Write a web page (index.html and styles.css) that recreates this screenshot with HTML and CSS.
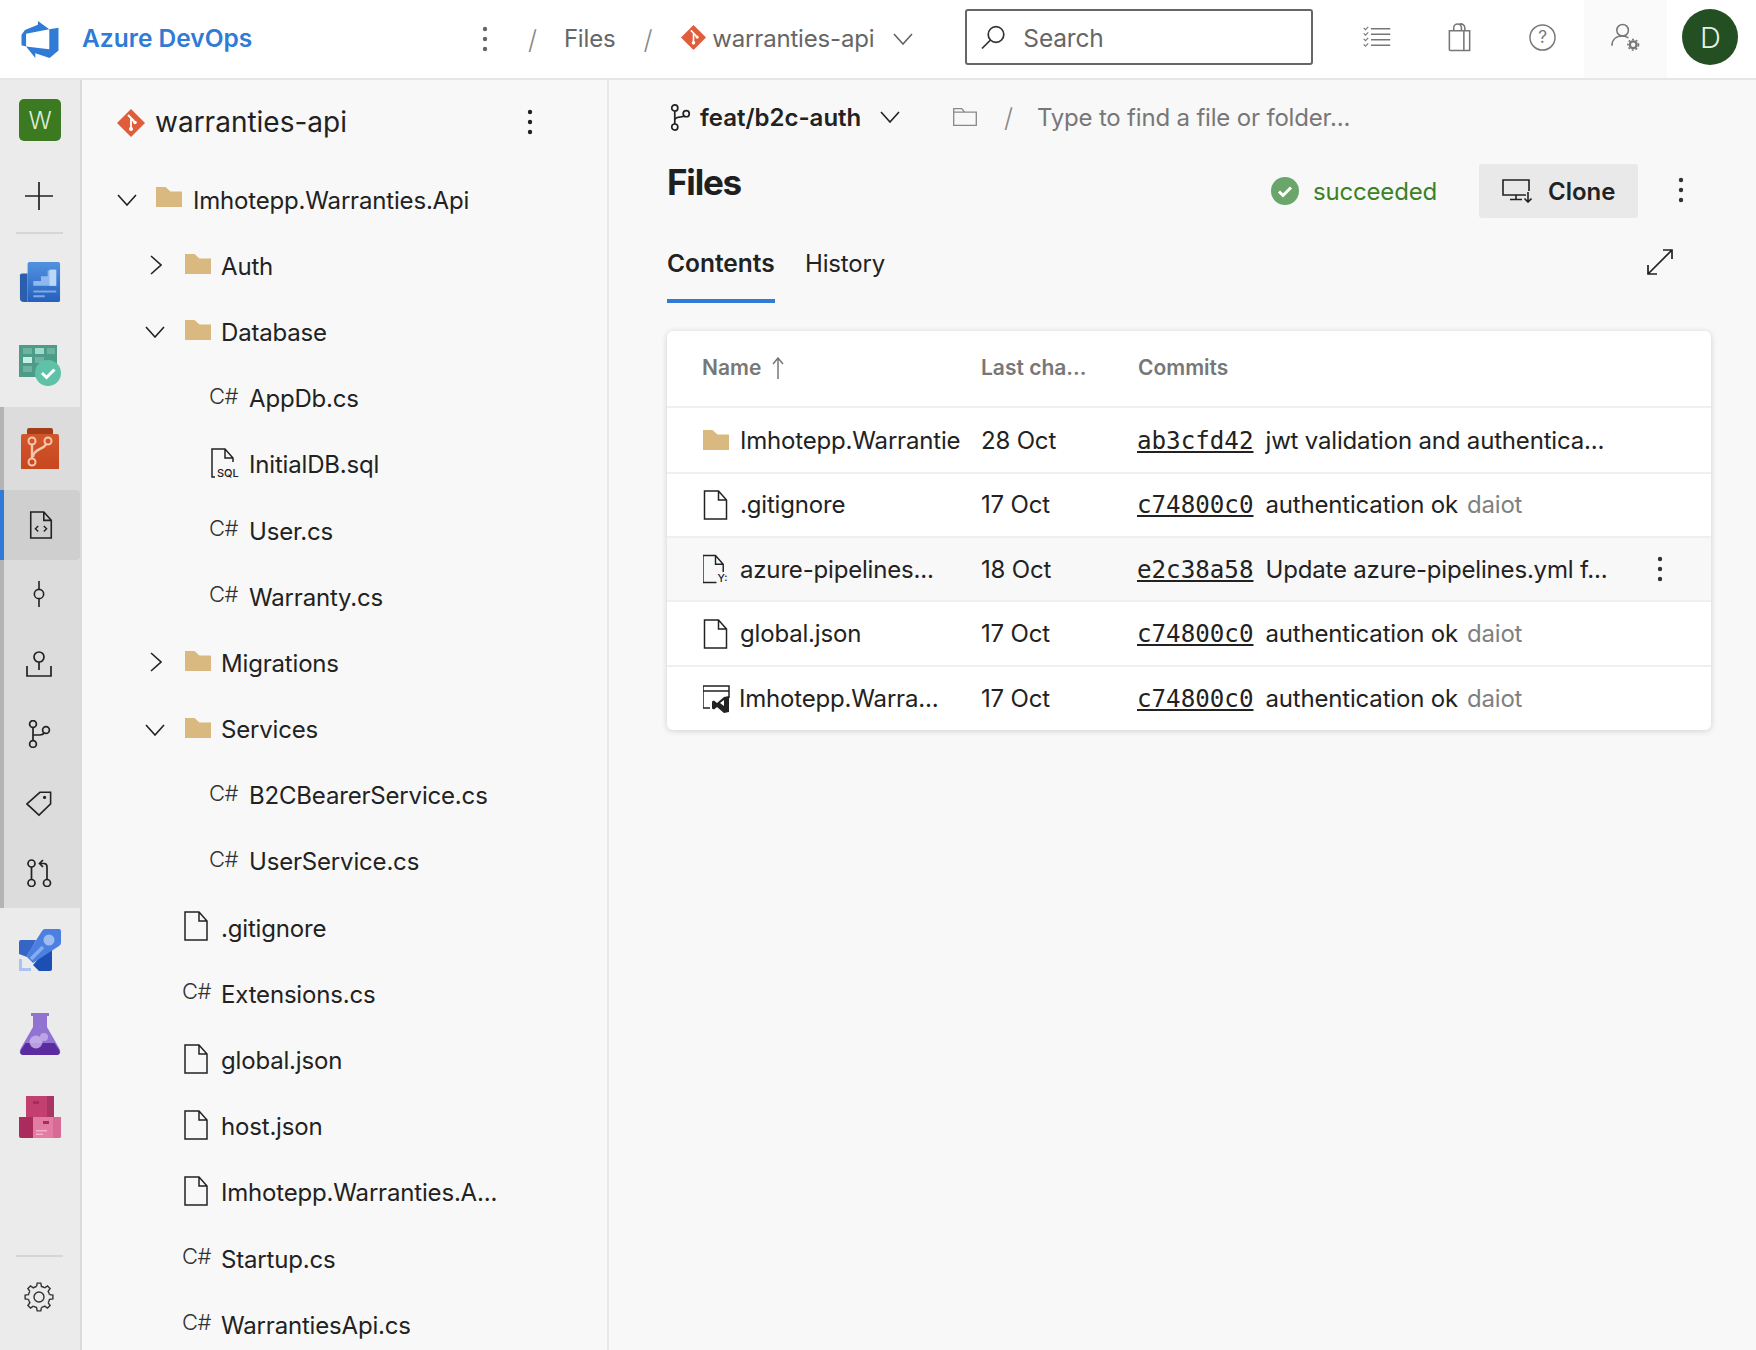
FILE: index.html
```html
<!DOCTYPE html>
<html lang="en">
<head>
<meta charset="utf-8">
<title>Files - warranties-api</title>
<link rel="stylesheet" href="styles.css">
</head>
<body>
<svg class="defs" aria-hidden="true">
  <symbol id="folder" viewBox="0 0 26 20"><path d="M0 0h9.500l5 4.500H26V20H0z" fill="#d9b97f"/></symbol>
  <symbol id="file" viewBox="0 0 24 30"><path d="M1 1h14l8 9v19H1zM15 1v9h8" fill="none" stroke="#222" stroke-width="1.500"/></symbol>
  <symbol id="git" viewBox="0 0 28 28"><path d="M14 0l14 14-14 14L0 14z" fill="#e05d3c"/><path d="M11 6l6 6M14 9v10M14 9.500l4.500 4.500" stroke="#fff" stroke-width="1.800" fill="none"/><circle cx="14" cy="20" r="2" fill="#fff"/><circle cx="18" cy="13.500" r="1.800" fill="#fff"/></symbol>
  <symbol id="down" viewBox="0 0 20 12"><path d="M1 1l9 10 9-10" fill="none" stroke="#222" stroke-width="1.600"/></symbol>
  <symbol id="right" viewBox="0 0 12 20"><path d="M1 1l10 9-10 9" fill="none" stroke="#222" stroke-width="1.600"/></symbol>
  <symbol id="kebab" viewBox="0 0 6 26"><circle cx="3" cy="3" r="2.200"/><circle cx="3" cy="13" r="2.200"/><circle cx="3" cy="23" r="2.200"/></symbol>
  <symbol id="branch" viewBox="0 0 22 28"><g fill="none" stroke="currentColor" stroke-width="1.800"><circle cx="5" cy="4" r="3.200"/><circle cx="5" cy="24" r="3.200"/><circle cx="17" cy="10" r="3.200"/><path d="M5 7.200v13.600M5 17c0-3 3-3 6-3.500 2-.4 4-.7 4.500-1.500"/></g></symbol>
  <path id="tooth" d="M-2.430-10.520L-1.830-13.880H1.830L2.430-10.520A10.800 10.800 0 0 1 5.720-9.160"/>
</svg>

<header class="topbar">
  <svg class="logo" viewBox="0 0 24 24"><path d="M0 8.877L2.247 5.910l8.405-3.416V.022l7.370 5.393L2.966 8.338v8.225L0 15.707zm24-4.450v14.651l-5.753 4.900-9.303-3.057v3.056l-5.978-7.416 15.057 1.798V5.415z" fill="#2f7bd5"/></svg>
  <span class="brand">Azure DevOps</span>
  <svg class="kebab top-kebab"><use href="#kebab"/></svg>
  <span class="slash crumb-slash-1">/</span>
  <span class="crumb crumb-files">Files</span>
  <span class="slash crumb-slash-2">/</span>
  <svg class="git-small"><use href="#git"/></svg>
  <span class="crumb crumb-repo">warranties-api</span>
  <svg class="chev-top"><use href="#down"/></svg>
  <div class="search">
    <svg class="search-icon" viewBox="0 0 24 24"><g fill="none" stroke="#333" stroke-width="1.700"><circle cx="15" cy="9" r="7.800"/><path d="M9.500 14.500L1 23"/></g></svg>
    <span>Search</span>
  </div>
  <div class="top-icons">
    <div class="top-icon"><svg class="ti" viewBox="0 0 30 24"><g fill="none" stroke="#777" stroke-width="1.500"><path d="M9 3h21M9 9h21M9 15h21M9 21h21"/><path d="M1 2l2 2 3-3M1 8l2 2 3-3M1 14l2 2 3-3M1 20l2 2 3-3" stroke-width="1.200"/></g></svg></div>
    <div class="top-icon"><svg class="ti-bag" viewBox="0 0 24 30"><g fill="none" stroke="#777" stroke-width="1.600"><path d="M1 8h21v20.500H2a1 1 0 0 1-1-1zM16 8v20.500M5.500 8V5a4 4 0 0 1 8 0v3M11 1.500a4 4 0 0 1 6 3.500v3"/></g></svg></div>
    <div class="top-icon"><svg class="ti-help" viewBox="0 0 28 28"><circle cx="14" cy="14" r="13" fill="none" stroke="#777" stroke-width="1.500"/><text x="14" y="20" text-anchor="middle" class="help-q">?</text></svg></div>
    <div class="top-icon top-icon-active"><svg class="ti-user" viewBox="0 0 30 30"><g fill="none" stroke="#777" stroke-width="1.600"><circle cx="12" cy="8" r="6"/><path d="M1 24c0-6 4-10 11-10 2 0 4 .5 6 2"/></g><circle cx="23" cy="23" r="3.500" fill="none" stroke="#777" stroke-width="2.400"/><circle cx="23" cy="23" r="5.500" fill="none" stroke="#777" stroke-width="1.600" stroke-dasharray="2 2"/></svg></div>
    <div class="avatar">D</div>
  </div>
</header>

<div class="body">
  <nav class="nav">
    <div class="nav-item nav-lg"><div class="project">W</div></div>
    <div class="nav-item nav-plus"><svg class="ni-plus" viewBox="0 0 28 28"><path d="M14 0v28M0 14h28" stroke="#222" stroke-width="1.700"/></svg></div>
    <div class="nav-sep"></div>
    <div class="nav-item nav-service nav-first">
      <svg class="ni" viewBox="0 0 42 44"><path d="M0 15a2 2 0 0 1 2-2h6v30H4a4 4 0 0 1-4-4z" fill="#2b5fae"/><path d="M8 3a2 2 0 0 1 2-2h30a2 2 0 0 1 2 2v38a2 2 0 0 1-2 2H8z" fill="url(#gb)"/><path d="M14 21h8v-5h7v-6h9v16H14z" fill="#8fb9ee"/><path d="M31 9h7v17h-7z" fill="#bcd7f8"/><path d="M14 31h24v2H14zM14 36h12v2H14z" fill="#7fa9e4"/><defs><linearGradient id="gb" x1="0" y1="0" x2="0" y2="1"><stop offset="0" stop-color="#5192e0"/><stop offset="1" stop-color="#2560bd"/></linearGradient></defs></svg>
    </div>
    <div class="nav-item nav-service">
      <svg class="ni" viewBox="0 0 42 42"><path d="M0 1h38v32H0z" fill="#4e9c87"/><path d="M4 4h9v6H4zM16 4h9v6h-9zM28 4h8v6h-8zM4 13h9v6H4zM16 13h9v6h-9zM4 22h9v6H4z" fill="#6cb4a1"/><path d="M16 4h9v6h-9z" fill="#9edbc9"/><path d="M4 13h9v6H4z" fill="#c2f0e4"/><circle cx="29" cy="29" r="13" fill="#5fc2a8"/><path d="M23 29l4.500 4.500 8-8" fill="none" stroke="#fff" stroke-width="3"/></svg>
    </div>
    <div class="nav-group">
      <div class="nav-item nav-service nav-repos">
        <svg class="ni-repos" viewBox="0 0 38 42"><path d="M6 3a2 2 0 0 1 2-2h22a2 2 0 0 1 2 2v4H6z" fill="#a33c19"/><path d="M0 9a2 2 0 0 1 2-2h34a2 2 0 0 1 2 2v33H0z" fill="url(#gr)"/><g fill="none" stroke="#f7c6ac" stroke-width="2"><circle cx="11" cy="14" r="3.500"/><circle cx="27" cy="14" r="3.500"/><circle cx="11" cy="35" r="3.500"/><path d="M11 17.500v14M25 17c-1 5-13 5-13 13" stroke-width="2.400"/></g><defs><linearGradient id="gr" x1="0" y1="0" x2="0" y2="1"><stop offset="0" stop-color="#d2562c"/><stop offset="1" stop-color="#c7471f"/></linearGradient></defs></svg>
      </div>
      <div class="nav-item nav-sub nav-active">
        <svg class="ns" viewBox="0 0 24 30"><path d="M1 1h14l8 9v19H1zM15 1v9h8" fill="none" stroke="#222" stroke-width="1.700"/><path d="M9 16l-3 3 3 3M15 16l3 3-3 3" fill="none" stroke="#222" stroke-width="1.500"/></svg>
      </div>
      <div class="nav-item nav-sub"><svg class="ns" viewBox="0 0 24 30"><g fill="none" stroke="#222" stroke-width="1.700"><circle cx="12" cy="15" r="5"/><path d="M12 1v9M12 20v9"/></g></svg></div>
      <div class="nav-item nav-sub"><svg class="ns" viewBox="0 0 26 26"><g fill="none" stroke="#222" stroke-width="1.700"><circle cx="13" cy="6" r="5"/><path d="M13 11v8M1 15v10h24V15"/></g></svg></div>
      <div class="nav-item nav-sub"><svg class="ns" viewBox="0 0 22 28"><g fill="none" stroke="#222" stroke-width="1.700"><circle cx="5" cy="4" r="3.400"/><circle cx="5" cy="24" r="3.400"/><circle cx="18" cy="10" r="3.400"/><path d="M5 7.400v13.200M5 15h6c3 0 5-1 5-3"/></g></svg></div>
      <div class="nav-item nav-sub"><svg class="ns" viewBox="0 0 28 28"><path d="M1 15L15 2.500h11.500V15L14 27z" fill="none" stroke="#222" stroke-width="1.700"/><circle cx="20" cy="8" r="1.700" fill="#222"/></svg></div>
      <div class="nav-item nav-sub"><svg class="ns" viewBox="0 0 24 28"><g fill="none" stroke="#222" stroke-width="1.700"><circle cx="4.500" cy="4.500" r="3.500"/><circle cx="4.500" cy="24" r="3.500"/><circle cx="20" cy="24" r="3.500"/><path d="M4.500 8v12.500M20 20.500V8c0-2-1-3.500-3-3.500h-4M16 1l-3.500 3.500L16 8"/></g></svg></div>
    </div>
    <div class="nav-item nav-service">
      <svg class="ni" viewBox="0 0 42 42"><path d="M2 11h15L8 28l-8-3V13a2 2 0 0 1 2-2z" fill="#3565c5"/><path d="M14 36L33 14v26a2 2 0 0 1-2 2H20z" fill="#1c4fb3"/><path d="M7 27L23 2a4 4 0 0 1 3-2h14a2 2 0 0 1 2 2v12a4 4 0 0 1-2 3L14 34z" fill="#4b80e0"/><circle cx="30" cy="11" r="5.500" fill="#9dbdf1"/><path d="M0 30h3v9h9v3H0z" fill="#a9c3f3"/><path d="M12 30L24 18" stroke="#86acee" stroke-width="3.500"/></svg>
    </div>
    <div class="nav-item nav-service nav-flask">
      <svg class="ni" viewBox="0 0 42 42"><path d="M12 0h18v3h-2v11l12 21c2 3 2 7-3 7H5c-5 0-5-4-3-7l12-21V3h-2z" fill="#9174d2"/><path d="M6.500 30h29L40 37c1.500 3 .5 5-3 5H5c-3.500 0-4.500-2-3-5z" fill="#5a2ca0"/><circle cx="17" cy="29" r="6.500" fill="#c9b1ea" opacity=".85"/><circle cx="25" cy="24" r="4" fill="#bda3e6"/></svg>
    </div>
    <div class="nav-item nav-service">
      <svg class="ni" viewBox="0 0 42 42"><path d="M7 0h28v21H7z" fill="#c23f6f"/><path d="M28 0h7v21h-7z" fill="#aa3562"/><path d="M0 21h14v21H2a2 2 0 0 1-2-2z" fill="#a92c5c"/><path d="M14 21h28v19a2 2 0 0 1-2 2H14z" fill="#e37ba3"/><path d="M34 21h8v19a2 2 0 0 1-2 2h-6z" fill="#d76b95"/><path d="M14 5h6v3h-6zM24 25h6v3h-6z" fill="#a0305d"/><path d="M17 34h11v1.500H17zM17 37.500h7V39h-7z" fill="#f4b2cb"/></svg>
    </div>
    <div class="nav-sep nav-sep-bottom"></div>
    <div class="nav-item nav-gear">
      <svg class="ni-gear" viewBox="0 0 30 30"><g fill="none" stroke="#333" stroke-width="1.400"><circle cx="15" cy="15" r="5"/><use href="#tooth" transform="translate(15 15)"/><use href="#tooth" transform="translate(15 15) rotate(45)"/><use href="#tooth" transform="translate(15 15) rotate(90)"/><use href="#tooth" transform="translate(15 15) rotate(135)"/><use href="#tooth" transform="translate(15 15) rotate(180)"/><use href="#tooth" transform="translate(15 15) rotate(225)"/><use href="#tooth" transform="translate(15 15) rotate(270)"/><use href="#tooth" transform="translate(15 15) rotate(315)"/></g></svg>
    </div>
  </nav>

  <aside class="tree">
    <div class="tree-head">
      <svg class="git-large"><use href="#git"/></svg>
      <span class="tree-title">warranties-api</span>
      <svg class="kebab tree-kebab"><use href="#kebab"/></svg>
    </div>
    <ul class="tree-list">
      <li class="row d0"><svg class="tw-down"><use href="#down"/></svg><svg class="folder"><use href="#folder"/></svg><span class="name">Imhotepp.Warranties.Api</span></li>
      <li class="row d1"><svg class="tw-right"><use href="#right"/></svg><svg class="folder"><use href="#folder"/></svg><span class="name">Auth</span></li>
      <li class="row d1"><svg class="tw-down"><use href="#down"/></svg><svg class="folder"><use href="#folder"/></svg><span class="name">Database</span></li>
      <li class="row d2"><span class="cs">C#</span><span class="name">AppDb.cs</span></li>
      <li class="row d2"><svg class="file-ic sql" viewBox="0 0 28 30"><path d="M22 14V10l-8-9H1v28h3M14 1v9h8" fill="none" stroke="#222" stroke-width="1.500"/><text x="6" y="28.500" class="mini">SQL</text></svg><span class="name">InitialDB.sql</span></li>
      <li class="row d2"><span class="cs">C#</span><span class="name">User.cs</span></li>
      <li class="row d2"><span class="cs">C#</span><span class="name">Warranty.cs</span></li>
      <li class="row d1"><svg class="tw-right"><use href="#right"/></svg><svg class="folder"><use href="#folder"/></svg><span class="name">Migrations</span></li>
      <li class="row d1"><svg class="tw-down"><use href="#down"/></svg><svg class="folder"><use href="#folder"/></svg><span class="name">Services</span></li>
      <li class="row d2"><span class="cs">C#</span><span class="name">B2CBearerService.cs</span></li>
      <li class="row d2"><span class="cs">C#</span><span class="name">UserService.cs</span></li>
      <li class="row d1f"><svg class="file-ic"><use href="#file"/></svg><span class="name">.gitignore</span></li>
      <li class="row d1f"><span class="cs">C#</span><span class="name">Extensions.cs</span></li>
      <li class="row d1f"><svg class="file-ic"><use href="#file"/></svg><span class="name">global.json</span></li>
      <li class="row d1f"><svg class="file-ic"><use href="#file"/></svg><span class="name">host.json</span></li>
      <li class="row d1f"><svg class="file-ic"><use href="#file"/></svg><span class="name">Imhotepp.Warranties.A...</span></li>
      <li class="row d1f"><span class="cs">C#</span><span class="name">Startup.cs</span></li>
      <li class="row d1f"><span class="cs">C#</span><span class="name">WarrantiesApi.cs</span></li>
    </ul>
  </aside>

  <main class="main">
    <div class="pathbar">
      <svg class="branch-ic"><use href="#branch"/></svg>
      <span class="branch-name">feat/b2c-auth</span>
      <svg class="chev-branch"><use href="#down"/></svg>
      <svg class="path-folder" viewBox="0 0 24 18"><path d="M.7.7h8l3 3.500h11.600v13.100H.7zM.7 4.200h11" fill="none" stroke="#888" stroke-width="1.300"/></svg>
      <span class="slash path-slash">/</span>
      <span class="path-hint">Type to find a file or folder...</span>
    </div>
    <div class="title-row">
      <h1 class="title">Files</h1>
      <div class="status">
        <svg class="status-ic" viewBox="0 0 28 28"><circle cx="14" cy="14" r="14" fill="#6aa56c"/><path d="M8 14.500l4 4 8-8" fill="none" stroke="#fff" stroke-width="3"/></svg>
        <span class="status-text">succeeded</span>
      </div>
      <button class="clone">
        <svg class="clone-ic" viewBox="0 0 30 24"><g fill="none" stroke="#222" stroke-width="1.600"><path d="M24 16H1V1h26v11M14 16v4M8 20.500h12M26 13v10M22.500 19.500L26 23l3.500-3.500"/></g></svg>
        <span>Clone</span>
      </button>
      <svg class="kebab title-kebab"><use href="#kebab"/></svg>
    </div>
    <div class="tabs">
      <div class="tab tab-active">Contents</div>
      <div class="tab">History</div>
      <svg class="expand" viewBox="0 0 26 26"><path d="M1 25L25 1M16 1h9v9M1 16v9h9" fill="none" stroke="#222" stroke-width="1.700"/></svg>
    </div>
    <section class="card">
      <div class="t-row t-head">
        <div class="col-name head-name">Name <svg class="sort" viewBox="0 0 12 22"><path d="M6 22V1M1 7l5-6 5 6" fill="none" stroke="#777" stroke-width="1.500"/></svg></div>
        <div class="col-date">Last cha...</div>
        <div class="col-commit">Commits</div>
      </div>
      <div class="t-row t-first">
        <div class="col-name"><svg class="t-folder"><use href="#folder"/></svg><span class="t-name clip">Imhotepp.Warrantie</span></div>
        <div class="col-date">28 Oct</div>
        <div class="col-commit"><a class="hash">ab3cfd42</a><span class="msg">jwt validation and authentica...</span></div>
      </div>
      <div class="t-row">
        <div class="col-name"><svg class="t-file"><use href="#file"/></svg><span class="t-name">.gitignore</span></div>
        <div class="col-date">17 Oct</div>
        <div class="col-commit"><a class="hash">c74800c0</a><span class="msg">authentication ok</span><span class="author">daiot</span></div>
      </div>
      <div class="t-row t-hover">
        <div class="col-name"><svg class="t-file" viewBox="0 0 28 30"><path d="M22 18V10l-8-9H1v28h14M14 1v9h8" fill="none" stroke="#222" stroke-width="1.500"/><text x="16" y="29" class="mini">Y:</text></svg><span class="t-name">azure-pipelines...</span></div>
        <div class="col-date">18 Oct</div>
        <div class="col-commit"><a class="hash">e2c38a58</a><span class="msg">Update azure-pipelines.yml f...</span></div>
        <svg class="kebab row-kebab"><use href="#kebab"/></svg>
      </div>
      <div class="t-row">
        <div class="col-name"><svg class="t-file"><use href="#file"/></svg><span class="t-name">global.json</span></div>
        <div class="col-date">17 Oct</div>
        <div class="col-commit"><a class="hash">c74800c0</a><span class="msg">authentication ok</span><span class="author">daiot</span></div>
      </div>
      <div class="t-row t-last">
        <div class="col-name"><svg class="t-file t-sln" viewBox="0 0 28 28"><path d="M8 23H1V1h26v12M1 6h26" fill="none" stroke="#222" stroke-width="1.500"/><path d="M27 11v16l-5 1-7-6-3 2.500-2-1v-7l2-1 3 2.500 7-6zM22 15l-4 3 4 3z" fill="#222" fill-rule="evenodd"/></svg><span class="t-name">Imhotepp.Warra...</span></div>
        <div class="col-date">17 Oct</div>
        <div class="col-commit"><a class="hash">c74800c0</a><span class="msg">authentication ok</span><span class="author">daiot</span></div>
      </div>
    </section>
  </main>
</div>
</body>
</html>
```

FILE: styles.css
```css
* { box-sizing: border-box; }
html, body { margin: 0; padding: 0; height: 100%; }
body {
  width: 1756px;
  height: 1350px;
  overflow: hidden;
  font-family: Inter, "Liberation Sans", sans-serif;
  font-size: 24px;
  letter-spacing: -.18px;
  color: #222;
  background: #f8f8f8;
  display: flex;
  flex-direction: column;
}
svg { display: block; flex: none; }
.defs { display: none; }

/* top bar */
.topbar {
  height: 80px;
  flex: none;
  display: flex;
  align-items: center;
  background: #fff;
  border-bottom: 2px solid #e6e6e6;
  padding-left: 21px;
}
.logo { width: 38px; height: 37px; }
.brand { margin-left: 23px; font-size: 24.500px; letter-spacing: 0; font-weight: 600; color: #2f7bd5; width: 195px; white-space: nowrap; margin-bottom: 2px; }
.kebab { width: 6px; height: 26px; fill: #555; }
.top-kebab { margin-left: 205px; fill: #666; }
.slash { font-size: 26px; color: #888; font-weight: 300; }
.crumb-slash-1 { margin-left: 40px; }
.crumb { color: #666; margin-bottom: 2px; }
.crumb-files { margin-left: 27px; }
.crumb-slash-2 { margin-left: 28px; }
.git-small { margin-left: 29px; width: 25px; height: 25px; margin-bottom: 3px; }
.crumb-repo { margin-left: 6px; }
.chev-top { margin-left: 19px; width: 20px; height: 12px; opacity: .7; }
.search {
  margin-left: 52px;
  width: 348px;
  height: 56px;
  border: 2px solid #666;
  border-radius: 3px;
  display: flex;
  align-items: center;
  padding: 2px 0 0 14px;
  color: #666;
  font-size: 24.500px;
  margin-bottom: 4px;
}
.search-icon { width: 24px; height: 25px; margin: 0 18px 2px 0; }
.top-icons { display: flex; align-items: center; margin-left: 22px; height: 78px; }
.top-icon { width: 83px; height: 78px; display: flex; align-items: center; justify-content: center; padding-bottom: 4px; }
.top-icon-active { background: #fafafa; }
.ti { width: 29px; height: 22px; }
.ti-bag { width: 24px; height: 29px; }
.ti-help { width: 27px; height: 27px; }
.ti-user { width: 29px; height: 30px; }
.help-q { font-size: 18px; fill: #777; font-family: Inter, sans-serif; }
.avatar {
  margin-left: 15px;
  width: 56px;
  height: 56px;
  border-radius: 50%;
  background: #234f22;
  color: #e8efe6;
  font-size: 29px;
  font-weight: 300;
  display: flex;
  align-items: center;
  justify-content: center;
  margin-bottom: 4px;
}

/* body */
.body { flex: 1; display: flex; min-height: 0; }

/* left nav */
.nav {
  width: 82px;
  flex: none;
  background: #ebebeb;
  border-right: 2px solid #dadada;
  display: flex;
  flex-direction: column;
}
.nav-item { display: flex; align-items: center; justify-content: center; }
.nav-lg { height: 80px; }
.nav-plus { height: 72px; padding-right: 2px; }
.nav-sep { height: 2px; margin: 0 17px 0 16px; background: #d6d6d6; flex: none; }
.nav-service { height: 83.500px; }
.nav-first { margin-top: 6px; }
.project {
  width: 42px;
  height: 42px;
  border-radius: 5px;
  background: #3c7a21;
  color: #dfeeda;
  font-size: 24px;
  font-weight: 300;
  display: flex;
  align-items: center;
  justify-content: center;
}
.ni-plus { width: 28px; height: 28px; }
.ni { width: 42px; height: 42px; }
.ni-repos { width: 38px; height: 42px; }
.nav-group {
  background: #dcdcdc;
  border-left: 4px solid #b4b4b4;
  height: 501px;
  display: flex;
  flex-direction: column;
}
.nav-repos { height: 83px; padding-right: 4px; }
.nav-sub { height: 69.800px; padding-right: 6px; }
.nav-active {
  background: #cfcfcf;
  border-left: 4px solid #2f7bd5;
  margin-left: -4px;
  padding-right: 2px;
  border-radius: 0 4px 4px 0;
}
.ns { width: 26px; height: 28px; }
.nav-flask { padding-top: 2px; }
.nav-sep-bottom { margin-top: auto; }
.nav-gear { height: 80px; margin-bottom: 13px; padding-right: 2px; }
.ni-gear { width: 30px; height: 30px; }

/* tree */
.tree {
  width: 527px;
  flex: none;
  border-right: 2px solid #e8e8e8;
  overflow: hidden;
}
.tree-head { height: 87px; display: flex; align-items: center; padding-left: 35px; }
.git-large { width: 28px; height: 28px; margin-bottom: 2px; }
.tree-title { margin: 0 0 3px 10px; font-size: 28px; letter-spacing: 0; width: 372px; }
.tree-kebab { fill: #222; margin-bottom: 4px; }
.tree-list { list-style: none; margin: 0; padding: 0; }
.row { height: 66.200px; display: flex; align-items: center; white-space: nowrap; }
.folder { width: 26px; height: 20px; margin-bottom: 4px; }
.d0 { padding-left: 35px; }
.d0 .folder { margin-bottom: 6px; }
.d0 .tw-down { width: 20px; height: 12px; margin-right: 19px; }
.d0 .name { margin-left: 11px; }
.d1 { padding-left: 63px; }
.d1 .tw-down { width: 20px; height: 12px; margin-right: 20px; }
.d1 .tw-right { width: 12px; height: 20px; margin: 0 23px 2px 5px; }
.d1 .name { margin-left: 10px; }
.d2 { padding-left: 127px; }
.d2 .name { margin-left: 12px; }
.d1f { padding-left: 100px; }
.d1f .name { margin-left: 11px; }
.cs { width: 28px; font-size: 22px; font-weight: 300; color: #333; padding-bottom: 6px; white-space: nowrap; letter-spacing: -.5px; }
.file-ic { width: 28px; height: 30px; margin-bottom: 4px; }
.sql { margin-left: 2px; margin-right: -2px; }
.mini { font-size: 11px; fill: #222; font-family: Inter, sans-serif; font-weight: 500; letter-spacing: 0; }

/* main */
.main { flex: 1; padding: 0 45px 0 58px; min-width: 0; }
.pathbar { height: 74px; display: flex; align-items: center; padding-left: 3px; }
.branch-ic { width: 21px; height: 27px; color: #222; }
.branch-name { margin-left: 9px; font-weight: 600; letter-spacing: 0; width: 164px; white-space: nowrap; }
.chev-branch { margin-left: 16px; width: 20px; height: 12px; }
.path-folder { margin-left: 53px; width: 24px; height: 18px; }
.path-slash { margin-left: 27px; }
.path-hint { margin-left: 24px; color: #777; white-space: nowrap; }
.title-row { display: flex; align-items: center; padding-top: 9px; height: 65px; }
.title { margin: 0 auto 18px 0; font-size: 35px; font-weight: 700; letter-spacing: -1.200px; line-height: 40px; color: #1f1f1f; }
.status { display: flex; align-items: center; }
.status-ic { width: 28px; height: 28px; }
.status-text { margin-left: 14px; color: #3b8125; }
.clone {
  margin-left: 42px;
  width: 159px;
  height: 54px;
  border: 0;
  border-radius: 3px;
  background: #e9e9e9;
  display: flex;
  align-items: center;
  padding: 0 0 0 23px;
  font: 600 24px Inter, sans-serif;
  color: #222;
}
.clone-ic { width: 30px; height: 24px; margin-right: 16px; }
.title-kebab { margin: 0 27px 2px 40px; fill: #333; }
.tabs { height: 84px; display: flex; }
.tab { padding: 28px 0 18px; line-height: 34px; height: 84px; white-space: nowrap; }
.tab-active { padding: 27px 0 19px; font-size: 24.500px; letter-spacing: 0; font-weight: 600; border-bottom: 4px solid #2f7bd5; width: 108px; margin-right: 30px; }
.expand { margin: 30px 38px 0 auto; width: 26px; height: 26px; }

/* table */
.card {
  margin-top: 28px;
  background: #fff;
  border-radius: 6px;
  box-shadow: 0 1px 6px rgba(0, 0, 0, .16);
  overflow: hidden;
  height: 399px;
}
.t-row {
  height: 64.400px;
  display: grid;
  grid-template-columns: 36px 278px 157px 1fr 72px;
  align-items: center;
  border-bottom: 2px solid #efefef;
  white-space: nowrap;
}
.col-name { grid-column: 2; display: flex; align-items: center; overflow: hidden; }
.col-date { grid-column: 3; }
.col-commit { grid-column: 4; display: flex; align-items: baseline; }
.t-head { height: 77px; padding-bottom: 2px; color: #777; font-size: 21px; letter-spacing: 0; font-weight: 600; }
.t-first { height: 65.600px; padding-top: 1px; }
.t-last { border-bottom: 0; }
.t-hover { background: #f8f8f8; }
.head-name { gap: 11px; margin-left: -1px; }
.sort { width: 12px; height: 22px; }
.t-folder { width: 26px; height: 20px; margin-right: 11px; }
.t-file { width: 27px; height: 30px; margin: 0 11px 0 -1px; }
.t-sln { width: 28px; height: 28px; margin: 0 9px 0 -1px; }
.t-name { white-space: nowrap; }
.clip { overflow: hidden; }
.hash { font-family: "DejaVu Sans Mono", monospace; font-size: 24.200px; letter-spacing: 0; text-decoration: underline; color: #222; margin-left: -1px; }
.msg { margin-left: 12px; }
.author { margin-left: 9px; color: #808080; }
.row-kebab { grid-column: 5; justify-self: center; fill: #333; margin-right: 30px; }
```
